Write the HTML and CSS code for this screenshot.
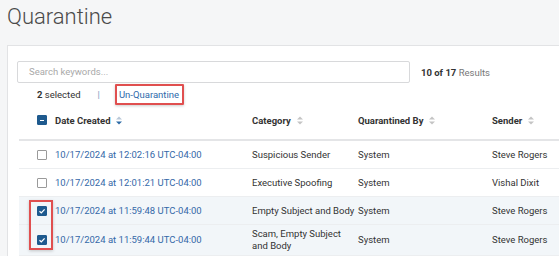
FILE: index.html
```html
<!DOCTYPE html>
<html lang="en">
<head>
    <meta charset="UTF-8">
    <title>Quarantine</title>
    <link rel="stylesheet" href="styles.css">
</head>
<body>
    <h1 class="title">Quarantine</h1>
    <div class="card">
        <div class="search-row">
            <div class="search">Search keywords...</div>
            <div class="results"><b>10 of 17</b> Results</div>
        </div>
        <div class="select-bar">
            <span class="count"><b>2</b> selected</span>
            <span class="pipe">|</span>
            <span class="action">Un-Quarantine</span>
        </div>
        <div class="grid">
            <div class="row head">
                <div class="cell check"><span class="box partial"></span></div>
                <div class="cell">Date Created
                    <svg class="sort" width="6" height="9" viewBox="0 0 6 9"><path d="M0 3.5 3 0.5 6 3.5Z" fill="#b9c8d8"/><path d="M0 5.5 3 8.5 6 5.5Z" fill="#2d6aa6"/></svg>
                </div>
                <div class="cell">Category
                    <svg class="sort" width="6" height="9" viewBox="0 0 6 9"><path d="M0 3.5 3 0.5 6 3.5Z" fill="#c4c4c4"/><path d="M0 5.5 3 8.5 6 5.5Z" fill="#c4c4c4"/></svg>
                </div>
                <div class="cell">Quarantined By
                    <svg class="sort" width="6" height="9" viewBox="0 0 6 9"><path d="M0 3.5 3 0.5 6 3.5Z" fill="#c4c4c4"/><path d="M0 5.5 3 8.5 6 5.5Z" fill="#c4c4c4"/></svg>
                </div>
                <div class="cell">Sender
                    <svg class="sort" width="6" height="9" viewBox="0 0 6 9"><path d="M0 3.5 3 0.5 6 3.5Z" fill="#c4c4c4"/><path d="M0 5.5 3 8.5 6 5.5Z" fill="#c4c4c4"/></svg>
                </div>
            </div>
            <div class="row">
                <div class="cell check"><span class="box"></span></div>
                <div class="cell link">10/17/2024 at 12:02:16 UTC-04:00</div>
                <div class="cell">Suspicious Sender</div>
                <div class="cell">System</div>
                <div class="cell">Steve Rogers</div>
            </div>
            <div class="row">
                <div class="cell check"><span class="box"></span></div>
                <div class="cell link">10/17/2024 at 12:01:21 UTC-04:00</div>
                <div class="cell">Executive Spoofing</div>
                <div class="cell">System</div>
                <div class="cell">Vishal Dixit</div>
            </div>
            <div class="picked">
                <div class="row selected">
                    <div class="cell check"><span class="box on"><svg width="10" height="10" viewBox="0 0 10 10"><path d="M2.5 5.2 4.3 6.9 7.6 3.4" fill="none" stroke="#fff" stroke-width="1.3"/></svg></span></div>
                    <div class="cell link">10/17/2024 at 11:59:48 UTC-04:00</div>
                    <div class="cell">Empty Subject and Body</div>
                    <div class="cell">System</div>
                    <div class="cell">Steve Rogers</div>
                </div>
                <div class="row selected tall">
                    <div class="cell check"><span class="box on"><svg width="10" height="10" viewBox="0 0 10 10"><path d="M2.5 5.2 4.3 6.9 7.6 3.4" fill="none" stroke="#fff" stroke-width="1.3"/></svg></span></div>
                    <div class="cell link">10/17/2024 at 11:59:44 UTC-04:00</div>
                    <div class="cell">Scam, Empty Subject<br>and Body</div>
                    <div class="cell">System</div>
                    <div class="cell">Steve Rogers</div>
                </div>
                <div class="mark"></div>
            </div>
        </div>
    </div>
</body>
</html>
```

FILE: styles.css
```css
body {
    margin: 0;
    background-color: #f5f6f7;
    font-family: Roboto, 'Liberation Sans', sans-serif;
    color: #333;
    width: 559px;
    height: 256px;
    overflow: hidden;
}
.title {
    margin: 0;
    padding: 2px 0 0 7px;
    height: 43px;
    font-size: 22px;
    font-weight: 300;
    color: #4a4a4a;
    line-height: 30px;
}
.card {
    margin-left: 7px;
    width: 620px;
    height: 260px;
    background-color: #fff;
    border: 1px solid #e2e3e5;
    padding: 15px 0 0 9px;
    box-sizing: border-box;
}
.search-row {
    display: flex;
    align-items: center;
    gap: 11px;
}
.search {
    width: 393px;
    height: 22px;
    box-sizing: border-box;
    border: 1px solid #d8d9db;
    border-radius: 2px;
    padding-left: 11px;
    font-size: 9.5px;
    line-height: 20px;
    color: #a9a9a9;
}
.results {
    font-size: 9.5px;
    color: #777;
}
.results b {
    color: #333;
    font-weight: 700;
}
.select-bar {
    display: flex;
    align-items: center;
    height: 22px;
    padding-left: 20px;
    font-size: 9.5px;
}
.count b {
    font-weight: 700;
}
.pipe {
    margin-left: 17px;
    color: #7a9cc0;
}
.action {
    margin-left: 15px;
    color: #2e6aab;
    padding: 3px 3px 3px 2px;
    border: 2px solid #e04f4f;
    border-radius: 1px;
    box-shadow: 0 1px 3px rgba(0, 0, 0, 0.2);
}
.grid {
    margin-left: 2px;
    font-size: 9.5px;
}
.row {
    display: grid;
    grid-template-columns: 36px 197px 106px 134px 1fr;
    align-items: center;
    height: 27px;
    border-bottom: 1px solid #eceef0;
}
.row.head {
    height: 30px;
    padding-bottom: 4px;
    border-bottom: 2px solid #e4e5e7;
    font-weight: 700;
    color: #333;
}
.row.selected {
    background-color: #f2f6f9;
}
.row.tall {
    height: 30px;
    line-height: 12px;
}
.cell {
    display: flex;
    align-items: center;
    gap: 6px;
}
.check {
    padding-left: 18px;
}
.link {
    color: #3468a8;
}
.box {
    width: 10px;
    height: 10px;
    box-sizing: border-box;
    border: 1px solid #9a9a9a;
    border-radius: 1px;
    background-color: #fff;
    position: relative;
}
.box.partial {
    background-color: #1e5a8e;
    border-color: #1e5a8e;
}
.box.partial::after {
    content: "";
    position: absolute;
    left: 2px;
    top: 3.5px;
    width: 4px;
    height: 1px;
    background-color: #fff;
}
.box.on {
    background-color: #1e5a8e;
    border-color: #1e5a8e;
}
.box.on svg {
    position: absolute;
    left: -1px;
    top: -1px;
}
.picked {
    position: relative;
}
.mark {
    position: absolute;
    left: 10px;
    top: 3px;
    width: 24px;
    height: 50px;
    box-sizing: border-box;
    border: 2px solid #e04f4f;
    box-shadow: 0 1px 3px rgba(0, 0, 0, 0.2);
}
```
